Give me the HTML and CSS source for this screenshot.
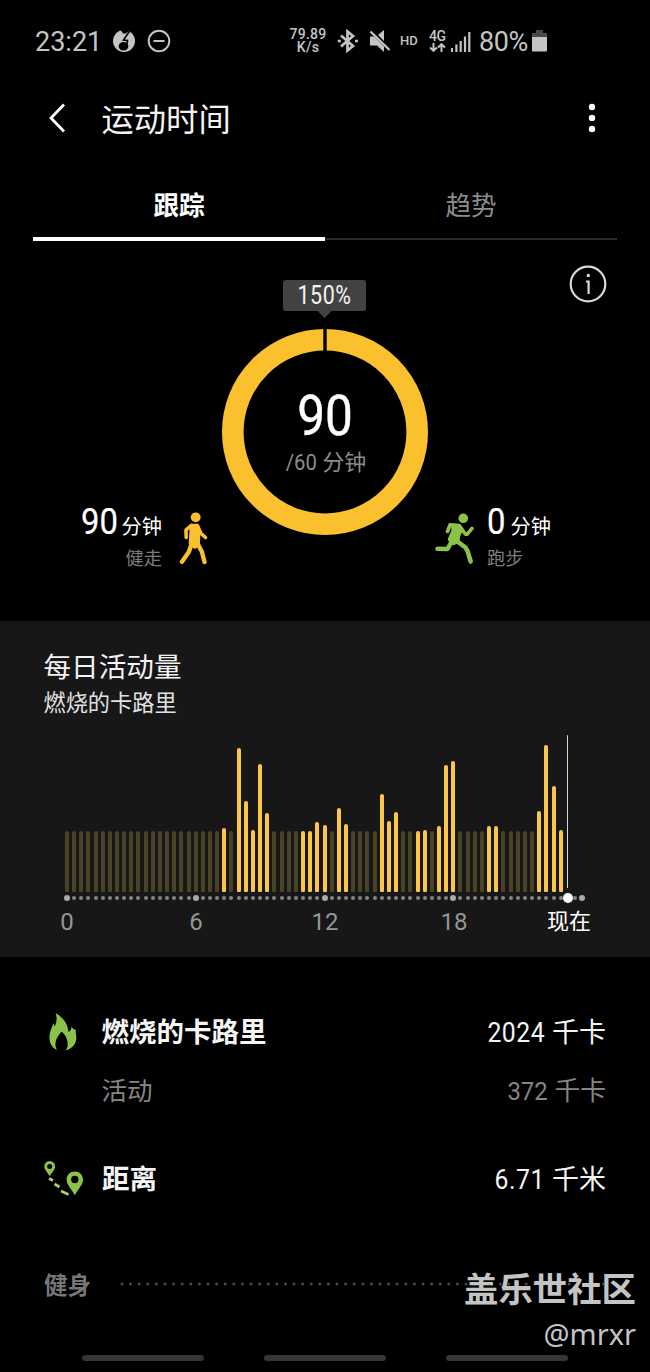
FILE: index.html
```html
<!DOCTYPE html>
<html lang="zh-CN">
<head>
<meta charset="utf-8">
<title>运动时间</title>
<link rel="stylesheet" href="styles.css">
</head>
<body>
<div class="screen">
  <header class="status">
    <span class="clock">23:21</span>
    <svg class="st-app" width="24" height="24" viewBox="0 0 24 24"><circle cx="12" cy="12" r="11" fill="#c4c4c4"/><path d="M8 0 11 4.500 13.500 4.500 20 0z" fill="#000"/><path d="M18.500 1 14.500 6.500 11.500 11 15.500 11.500 14.500 17" fill="none" stroke="#000" stroke-width="1.600"/><ellipse cx="11.500" cy="17.300" rx="4.800" ry="4.300" fill="#000"/></svg>
    <svg class="st-dnd" width="24" height="24" viewBox="0 0 24 24" fill="none" stroke="#c4c4c4" stroke-width="2"><circle cx="12" cy="12" r="10.300"/><path d="M6.500 12h11"/></svg>
    <span class="speed">79.89<br>K/s</span>
    <svg class="st-bt" width="22" height="24" viewBox="0 0 22 24" fill="none" stroke="#c4c4c4" stroke-width="2.700"><path d="M4 6.500 16 17l-5.500 4.500v-19L16 7 4 17.500"/><path d="M.8 12h3M18 12h3"/></svg>
    <svg class="st-mute" width="22" height="24" viewBox="0 0 22 24"><path d="M1 7.500h4l10 10v5.500l-7-6.500H1zM9 6 15 1v11z" fill="#c4c4c4"/><path d="M1.500 2.500 20.500 21" stroke="#c4c4c4" stroke-width="2.400"/></svg>
    <span class="hd">HD</span>
    <span class="net">4G<svg width="17" height="9" viewBox="0 0 17 9" fill="none" stroke="#c4c4c4" stroke-width="2"><path d="M4.500 0v7M1 4.500l3.500 3.300L8 4.500M12.500 9V2M9 4.500l3.500-3.300L16 4.500"/></svg></span>
    <svg class="st-sig" width="20" height="20" viewBox="0 0 20 20" fill="#c4c4c4"><path d="M0 16h2v4H0zM4.300 12.500h2.200V20H4.300zM8.600 9h2.200v11H8.600zM12.900 4.500h2.200V20h-2.200zM17.200 0h2.200v20h-2.200z"/></svg>
    <span class="batt">80%</span>
    <svg class="st-bat" width="15" height="22" viewBox="0 0 15 22"><path d="M4 0h7v3h4v5H0V3h4z" fill="#484848"/><path d="M0 7h15v13.500a1 1 0 0 1-1 1H1a1 1 0 0 1-1-1z" fill="#c4c4c4"/></svg>
  </header>

  <div class="appbar">
    <svg class="back" width="18" height="30" viewBox="0 0 18 30" fill="none" stroke="#fff" stroke-width="2.800"><path d="M16 1.500 3 15l13 13.500"/></svg>
    <h1>运动时间</h1>
    <svg class="more" width="8" height="30" viewBox="0 0 8 30" fill="#fff"><circle cx="4" cy="4" r="3.200"/><circle cx="4" cy="15" r="3.200"/><circle cx="4" cy="26" r="3.200"/></svg>
  </div>

  <nav class="tabs">
    <span class="tab active">跟踪</span>
    <span class="tab">趋势</span>
  </nav>

  <section class="hero">
    <div class="hero-top">
      <div class="tip"><span>150%</span></div>
      <svg class="info" width="38" height="38" viewBox="0 0 38 38" fill="none" stroke="#d8d8d8"><circle cx="19" cy="19" r="17.300" stroke-width="2.200"/><path d="M17 16.500h2.600V29" stroke-width="2.200"/><circle cx="19.300" cy="10.500" r="1.700" fill="#d8d8d8" stroke="none"/></svg>
    </div>
    <div class="goal">
      <div class="side walk">
        <div class="side-text">
          <div class="amount"><b>90</b>分钟</div>
          <div class="kind">健走</div>
        </div>
        <svg width="30" height="54" viewBox="0 0 30 54" fill="none" stroke="#fbc02d" stroke-linecap="round" stroke-linejoin="round"><circle cx="16.700" cy="5.300" r="4.900" fill="#fbc02d" stroke="none"/><path d="M12.500 13.500h6l1 7-.3 11.500-3.200 3-4.500-3.500.5-9z" fill="#fbc02d" stroke-width="3.600"/><path d="M12.500 13.500 7 17.800l.2 7.700M19 15l3 6.500 4.500 4" stroke-width="3.600"/><path d="M13 31 9.800 40 3 49.800M18.500 31.500l4.300 8 2.700 10.500" stroke-width="4.400"/></svg>
      </div>
      <div class="ring">
        <svg width="206" height="206" viewBox="0 0 206 206"><circle cx="103" cy="103" r="92.200" fill="none" stroke="#fbc02d" stroke-width="21.600"/><path d="M101.300 0h3.400v24h-3.400z" fill="#000"/></svg>
        <div class="ring-text">
          <div class="ring-value">90</div>
          <div class="ring-goal"><i>/60</i> 分钟</div>
        </div>
      </div>
      <div class="side run">
        <svg width="40" height="52" viewBox="0 0 40 52" fill="none" stroke="#8bc34a" stroke-linecap="round" stroke-linejoin="round"><circle cx="28.300" cy="5.300" r="4.800" fill="#8bc34a" stroke="none"/><path d="M18.500 13l6 .5 1.500 3-3 6-.5 5.500-4 2-3.500-3.500 3.500-8z" fill="#8bc34a" stroke-width="4.400"/><path d="M24 12.500l-9-.7-2.500 6.700M26 15l4.500 6.300h1.500l5-6" stroke-width="3.600"/><path d="M17 28 12.500 36 2.500 35.700M21 27.500l9.500 7 2 3.500 3.200 10.500" stroke-width="4.500"/></svg>
        <div class="side-text">
          <div class="amount"><b>0</b>分钟</div>
          <div class="kind">跑步</div>
        </div>
      </div>
    </div>
  </section>

  <section class="panel">
    <h2>每日活动量</h2>
    <p class="sub">燃烧的卡路里</p>
    <div class="bars" id="bars"></div>
    <div class="dots" id="dots"></div>
    <div class="hours"><span>0</span><span>6</span><span>12</span><span>18</span><span class="now">现在</span></div>
  </section>

  <section class="stats">
    <div class="stat">
      <svg width="28" height="38" viewBox="0 0 28 38"><path d="M6.500 0C13 4 18.500 9 19.500 19c2-1 3-3 3.200-6 .3 3 2.500 3 4.300 4-.8 3 .5 5 .3 8.500C27 32 22 36 16.500 37.500c2-2.500 2.500-4.500 2-8.500-.5-4-2-7-6-10.500-3 4-5.500 7-6 11.500-.3 3 .5 5 1.500 7C4 35.500.7 31 .5 25.500.2 20 2 16.500 4.500 10l1 3.500C7.500 10 8.500 5 6.500 0z" fill="#8bc34a"/></svg>
      <span class="name">燃烧的卡路里</span><span class="val"><i>2024</i> 千卡</span>
    </div>
    <div class="stat minor"><span class="name">活动</span><span class="val"><i>372</i> 千卡</span></div>
    <div class="stat dist">
      <svg width="40" height="36" viewBox="0 0 40 36"><path d="M5.700 0a5.400 5.400 0 0 1 5.400 5.500C11.100 8.500 8 11.500 5.700 15 3.400 11.500.3 8.500.3 5.500A5.400 5.400 0 0 1 5.700 0zm0 3a2.500 2.500 0 1 0 0 5 2.500 2.500 0 0 0 0-5zM30.800 10.500c4.600 0 8.200 3.500 8.200 8.200 0 5-5 9.300-8.200 15.500-3.200-6.200-8.200-10.500-8.200-15.500 0-4.700 3.600-8.200 8.200-8.200zm0 4.300a3.700 3.700 0 1 0 0 7.400 3.700 3.700 0 0 0 0-7.400z" fill="#8bc34a" fill-rule="evenodd"/><path d="M5 17.500l4 2M10.500 23l5 3M17 30l7.500 3.500" stroke="#a5d06c" stroke-width="2.700"/></svg>
      <span class="name">距离</span><span class="val"><i>6.71</i> 千米</span>
    </div>
    <div class="divider"><span>健身</span><svg width="484" height="4" viewBox="0 0 484 4"><path d="M2 2H484" stroke="#484848" stroke-width="3" stroke-linecap="round" stroke-dasharray="0 8.600"/></svg></div>
  </section>

  <footer class="navbar"><i></i><i></i><i></i></footer>
  <div class="credit"><strong>盖乐世社区</strong><span>@mrxr</span></div>
</div>
<script src="chart.js"></script>
</body>
</html>
```
FILE: styles.css
```css
* { box-sizing: border-box; }
body {
  margin: 0;
  background: #000;
  color: #f4f4f4;
  font-family: Roboto, "Noto Sans CJK SC", sans-serif;
}
h1, h2, p { margin: 0; font-weight: 400; }
svg { display: block; flex: none; }

.screen {
  position: relative;
  width: 650px;
  height: 1372px;
  overflow: hidden;
  display: flex;
  flex-direction: column;
}

.status {
  height: 82px;
  padding-left: 35px;
  display: flex;
  align-items: center;
  color: #c4c4c4;
  white-space: nowrap;
}
.clock { width: 77px; font-size: 27px; line-height: 30px; padding-top: 1px; }
.st-dnd { margin-left: 11px; }
.speed {
  width: 44px;
  margin-left: 115px;
  font-size: 14px;
  line-height: 13.5px;
  font-weight: 500;
  text-align: center;
  letter-spacing: .3px;
}
.st-bt { margin-left: 7px; }
.st-mute { margin-left: 10px; }
.hd { width: 20px; margin-left: 9px; margin-top: -1px; font-size: 13px; font-weight: 500; }
.net { width: 18px; margin-left: 9px; font-size: 14px; line-height: 13px; font-weight: 500; letter-spacing: -.4px; }
.st-sig { margin-left: 4px; margin-top: 1px; }
.batt { width: 52px; margin-left: 8px; padding-top: 1px; font-size: 27px; letter-spacing: -.4px; }
.st-bat { margin-left: 1px; }

.appbar {
  height: 74px;
  padding: 0 54px 0 48px;
  display: flex;
  align-items: center;
}
.appbar h1 { margin-left: 35.5px; flex: 1; font-size: 32.3px; line-height: 40px; padding-top: 2px; }
.appbar svg { margin-top: -2px; }

.tabs {
  height: 85px;
  margin: 0 33px;
  display: grid;
  grid-template-columns: 1fr 1fr;
}
.tab {
  padding-top: 35px;
  text-align: center;
  font-size: 25.6px;
  line-height: 30px;
  color: #8c8c8c;
  box-shadow: inset 0 -1px #000, inset 0 -3px #2c2c2c;
}
.tab.active { color: #fff; font-weight: 700; box-shadow: inset 0 -4px #fff; }

.hero { height: 380px; }
.hero-top {
  height: 88px;
  padding: 24px 43px 0 0;
  display: grid;
  grid-template-columns: 283px 83px 1fr;
  align-items: start;
}
.tip {
  grid-column: 2;
  height: 31px;
  margin-top: 15px;
  border-radius: 3px;
  background: #424242;
  text-align: center;
  font-size: 25.5px;
  line-height: 31px;
}
.tip::after {
  content: "";
  display: block;
  width: 14px;
  height: 7px;
  margin: 0 auto;
  background: #424242;
  clip-path: polygon(0 0, 100% 0, 50% 100%);
}
.tip span { display: block; letter-spacing: .6px; transform: scaleX(.84); }
.info { justify-self: end; }

.goal { display: grid; grid-template-columns: 222px 206px 222px; }
.ring { display: grid; height: 206px; }
.ring > * { grid-area: 1 / 1; }
.ring-text { text-align: center; padding-top: 57px; }
.ring-value { font-size: 55px; line-height: 60px; transform: scaleX(.9); color: #fff; -webkit-text-stroke: .4px #fff; }
.ring-goal { margin: 4px 1px 0 0; font-size: 22px; line-height: 26px; color: #8c8c8c; }
.ring-goal i { font-style: normal; display: inline-block; transform: scaleX(.92); transform-origin: right; }
.side { display: flex; padding-top: 170px; height: 242px; }
.side svg { margin-top: 13px; }
.walk { justify-content: flex-end; gap: 17px; padding-right: 13px; text-align: right; }
.run { padding-left: 7px; gap: 12px; }
.run svg { margin-top: 14px; }
.amount { height: 44px; padding-top: 1px; font-size: 20.2px; line-height: 44px; white-space: nowrap; color: #fff; }
.amount b { display: inline-block; font-weight: 400; font-size: 36.5px; transform: scaleX(.9); margin-right: 4px; -webkit-text-stroke: .2px #fff; }
.run .amount b { transform-origin: left; margin-right: 3px; }
.walk .amount b { transform-origin: right; }
.kind { margin-top: 4px; font-size: 18.3px; line-height: 24px; color: #7c7c7c; }

.panel { height: 336px; background: #171717; }
.panel h2 { padding: 30px 0 0 43.5px; font-size: 27.6px; line-height: 34px; }
.sub { padding: 4px 0 0 43.5px; font-size: 22.2px; line-height: 28px; color: #e2e2e2; }
.bars, .dots {
  margin-left: 63.3px;
  width: 524px;
  display: grid;
  grid-template-columns: repeat(73, 7.17px);
  justify-items: center;
}
.bars { height: 157px; margin-top: 18px; align-items: end; }
.bar { width: 4px; border-radius: 2px 2px 1px 1px; background: #fcc64a; }
.bar.idle { background: #4a4227; }
.bar.cursor { width: 1px; margin-bottom: 4px; background: #d8d8d8; }
.dots { height: 11px; align-items: center; }
.dot { width: 4px; height: 4px; border-radius: 50%; background: #858585; }
.dot.major { width: 6px; height: 6px; background: #aaa; }
.dot.current { width: 10px; height: 10px; background: #fff; }
.hours {
  display: grid;
  grid-template-columns: repeat(3, 129px) 129px 101px;
  margin: 4px 0 0 2.6px;
  text-align: center;
  font-size: 24px;
  line-height: 30px;
  color: #969696;
}
.hours .now { color: #fff; font-size: 22px; }

.stats { height: 383px; padding: 50px 44px 0; }
.stat { display: flex; align-items: center; height: 48px; }
.stat > svg { margin-left: 5px; margin-top: 2px; }
.stat .name { margin: -2px 0 0 24.6px; flex: 1; font-size: 27.5px; font-weight: 700; }
.stat .val { margin-top: -2px; font-size: 27px; }
.val i { display: inline-block; font-style: normal; font-size: 27.5px; letter-spacing: .6px; transform: scaleX(.9); transform-origin: right; }
.stat.minor { margin-top: 10px; color: #858585; }
.stat.minor .name { margin-left: 57.5px; font-size: 25.5px; font-weight: 400; }
.stat.minor .val { font-size: 25.8px; }
.minor .val i { font-size: 26.5px; letter-spacing: 0; }
.stat.dist { margin-top: 41px; }
.stat.dist > svg { margin-left: 0; }
.stat.dist .name { margin-left: 18px; }
.divider {
  margin-top: 64px;
  height: 36px;
  display: flex;
  align-items: center;
  gap: 29px;
  color: #777;
  font-size: 23.5px;
  font-weight: 700;
}

.navbar { display: flex; gap: 60px; padding: 15px 0 0 82px; }
.navbar i { width: 122px; height: 6px; border-radius: 3px; background: #353535; }

.credit {
  position: absolute;
  right: 14px;
  top: 1266px;
  display: flex;
  flex-direction: column;
  align-items: flex-end;
  color: #c2c4c6;
}
.credit strong { font-size: 34.4px; line-height: 48px; font-weight: 700; }
.credit span { font-family: "Noto Sans", "Noto Sans CJK SC", sans-serif; font-size: 29px; line-height: 39px; }
```
FILE: chart.js
```js
// Bar heights in px, keyed by 20-minute slot; other slots are idle.
const active = {
  22: 64, 24: 144, 25: 91, 26: 62, 27: 128, 28: 79, 33: 61, 34: 61, 35: 70, 36: 67,
  38: 84, 39: 68, 44: 98, 45: 71, 46: 80, 49: 61, 50: 62, 52: 66, 53: 127, 54: 131,
  59: 66, 60: 66, 66: 81, 67: 147, 68: 106, 69: 62
};
const NOW = 70;
const bars = document.getElementById('bars');
const dots = document.getElementById('dots');
for (let i = 0; i <= 72; i++) {
  if (i <= NOW) {
    const bar = document.createElement('i');
    bar.className = i === NOW ? 'bar cursor' : active[i] ? 'bar' : 'bar idle';
    bar.style.height = (i === NOW ? 153 : active[i] || 61) + 'px';
    bars.append(bar);
  }
  const dot = document.createElement('i');
  dot.className = 'dot' + (i === NOW ? ' current' : i % 18 === 0 ? ' major' : '');
  dots.append(dot);
}
```
